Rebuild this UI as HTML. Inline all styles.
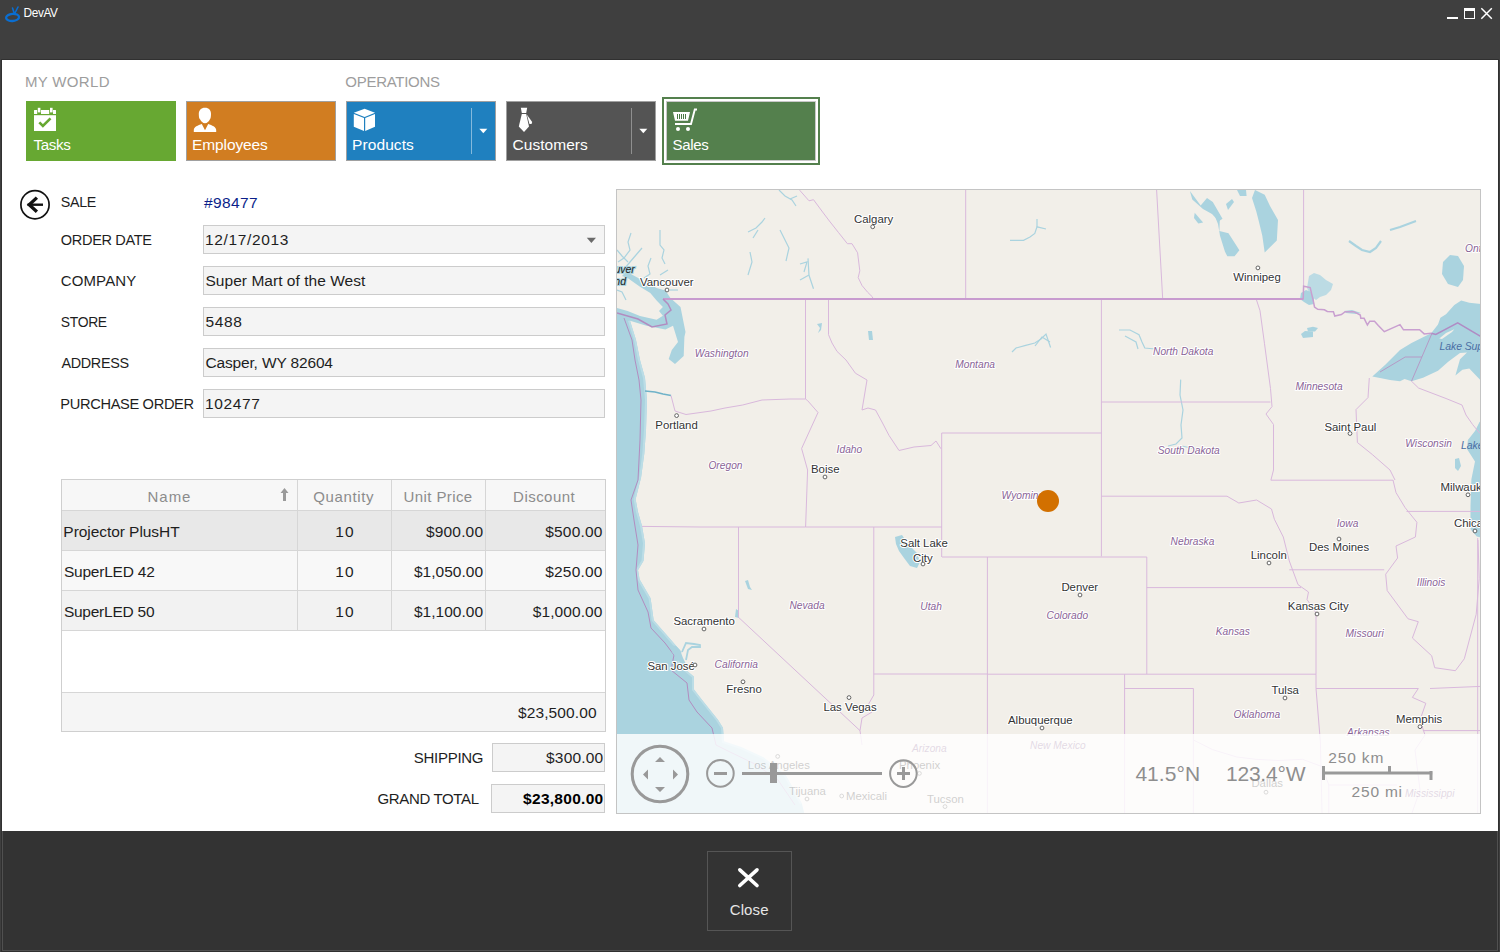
<!DOCTYPE html>
<html><head><meta charset="utf-8">
<style>
*{margin:0;padding:0;box-sizing:border-box}
html,body{width:1500px;height:952px;overflow:hidden;background:#3f3f3f;font-family:"Liberation Sans",sans-serif}
.abs{position:absolute}
.tile{top:101px;width:150px;height:60px}
.inp{left:203px;width:402px;height:29px;background:#f4f4f4;border:1px solid #cccccc}
.hl{left:62px;width:543px;height:1px;background:#d6d6d6}
.vl{top:480px;width:1px;height:150px;background:#d6d6d6}
.box{background:#f4f4f4;border:1px solid #cccccc}
.ct{font-family:"Liberation Sans",sans-serif;fill:#333;paint-order:stroke;stroke:#fff;stroke-width:2.2px;stroke-linejoin:round;letter-spacing:0px}
.stt{font-family:"Liberation Sans",sans-serif;font-style:italic;fill:#8a6496;paint-order:stroke;stroke:#fff;stroke-width:2px;stroke-linejoin:round;letter-spacing:0.03px}
.lk{font-family:"Liberation Sans",sans-serif;font-style:italic;fill:#4a6fa5;letter-spacing:-0.1px}
.isl{font-family:"Liberation Sans",sans-serif;font-style:italic;fill:#222;paint-order:stroke;stroke:#aad3df;stroke-width:2px}
.coord{color:#8c8c8c;font-size:21px;letter-spacing:-0.5px}
.sc{color:#8c8c8c;font-size:15.5px;letter-spacing:-0.3px}
</style></head>
<body>
<svg class="abs" style="left:3px;top:4px" width="20" height="20" viewBox="0 0 20 20">
  <ellipse cx="9.6" cy="13.4" rx="6.5" ry="3.6" fill="none" stroke="#0a6ed1" stroke-width="2.3" transform="rotate(-4 9.6 13.4)"/>
  <path d="M9.5 4 L11.5 10 M15 3 L11.5 10" stroke="#0a6ed1" stroke-width="1.6" stroke-linecap="round"/>
</svg>
<div class="abs" style="left:1447px;top:17px;width:11px;height:2px;background:#fff"></div>
<div class="abs" style="left:1464px;top:8px;width:11px;height:11px;border:1.5px solid #fff;border-top-width:3px"></div>
<svg class="abs" style="left:1480px;top:7px" width="14" height="14" viewBox="0 0 14 14"><path d="M1.3 1.3 L11.8 11.8 M11.8 1.3 L1.3 11.8" stroke="#fff" stroke-width="1.5"/></svg>

<div class="abs" style="left:1px;top:59px;width:1498px;height:893px;background:#303030"></div>
<div class="abs" style="left:2px;top:60px;width:1496px;height:771px;background:#fff"></div>
<div class="abs" style="left:2px;top:831px;width:1496px;height:120px;background:#333;border:1px solid #505050;border-top:none"></div>

<div class="abs tile" style="left:26px;background:#67a832"></div>
<div class="abs tile" style="left:186px;background:#d17d21;border:1px solid #a0a0a0"></div>
<div class="abs tile" style="left:346px;background:#1f80bf;border:1px solid #a0a0a0"></div>
<div class="abs tile" style="left:506px;background:#545454;border:1px solid #a0a0a0"></div>
<div class="abs" style="left:662px;top:97px;width:158px;height:68px;border:2px solid #54804d"></div>
<div class="abs tile" style="left:666px;background:#54804d;border:1px solid #c8c8c8"></div>

<div class="abs inp" style="top:225px"></div>
<div class="abs inp" style="top:266px"></div>
<div class="abs inp" style="top:307px"></div>
<div class="abs inp" style="top:348px"></div>
<div class="abs inp" style="top:389px"></div>

<div class="abs" style="left:61px;top:479px;width:545px;height:253px;border:1px solid #cfcfcf;background:#fff"></div>
<div class="abs" style="left:62px;top:480px;width:543px;height:30px;background:#f7f7f7"></div>
<div class="abs" style="left:62px;top:511px;width:543px;height:39px;background:#e8e8e8"></div>
<div class="abs" style="left:62px;top:551px;width:543px;height:39px;background:#f8f8f8"></div>
<div class="abs" style="left:62px;top:591px;width:543px;height:39px;background:#f2f2f2"></div>
<div class="abs" style="left:62px;top:693px;width:543px;height:38px;background:#f5f5f5"></div>
<div class="abs hl" style="top:510px"></div>
<div class="abs hl" style="top:550px"></div>
<div class="abs hl" style="top:590px"></div>
<div class="abs hl" style="top:630px"></div>
<div class="abs hl" style="top:692px"></div>
<div class="abs vl" style="left:297px"></div>
<div class="abs vl" style="left:391px"></div>
<div class="abs vl" style="left:485px"></div>
<svg class="abs" style="left:279px;top:487px" width="11" height="15" viewBox="0 0 11 15"><path d="M5.5 1 L9.5 6 H7 V14 H4 V6 H1.5 Z" fill="#9a9a9a"/></svg>
<div class="abs box" style="left:492px;top:743px;width:113px;height:29px"></div>
<div class="abs box" style="left:491px;top:784px;width:114px;height:29px"></div>

<svg class="abs" style="left:26px;top:101px" width="40" height="35" viewBox="26 101 40 35">
  <path d="M34 110.5 Q34 110 34.5 110 H37.2 V113.9 H34 Z M41 110 H49.2 V113.9 H41 Z M53 110 H55.5 Q56 110 56 110.5 V113.9 H53 Z" fill="#fff"/>
  <rect x="37.8" y="107.8" width="2.6" height="4.6" fill="#fff"/>
  <rect x="50" y="107.8" width="2.6" height="4.6" fill="#fff"/>
  <rect x="34" y="115.2" width="22" height="15.8" fill="#fff"/>
  <path d="M39.3 122.3 L42.9 125.9 L50.5 118.3" fill="none" stroke="#67a832" stroke-width="2.6"/>
</svg>
<svg class="abs" style="left:186px;top:101px" width="40" height="35" viewBox="186 101 40 35">
  <path d="M205 107.8 C209 107.8 211 110.5 211 114 C211 117 210.5 119 209.8 119.5 C208.8 121.5 207.3 123.2 205 123.2 C202.7 123.2 201.2 121.5 200.2 119.5 C199.2 119 198.8 117 198.8 114 C198.8 110.5 201 107.8 205 107.8 Z" fill="#fff"/>
  <path d="M201.8 124 L205 130.2 L208.2 124 C212 125.2 216.2 127 216.2 130 V132 H193.8 V130 C193.8 127 198 125.2 201.8 124 Z" fill="#fff"/>
</svg>
<svg class="abs" style="left:346px;top:101px" width="40" height="35" viewBox="346 101 40 35">
  <path d="M364.6 108.8 L375 112.8 L364.6 116.9 L353.8 112.8 Z" fill="#fff"/>
  <path d="M353.8 114 L364 117.9 V131 L353.8 126.8 Z" fill="#fff"/>
  <path d="M375 114 L365.2 117.9 V131 L375 126.8 Z" fill="#fff"/>
</svg>
<svg class="abs" style="left:506px;top:101px" width="40" height="35" viewBox="506 101 40 35">
  <path d="M520.8 107.8 H527.2 L526.2 113 H521.8 Z" fill="#fff"/>
  <path d="M521.8 114 H526.2 L529 126.6 L524 132 L518.8 126.6 Z" fill="#fff"/>
  <path d="M526.8 114.5 L532.2 122 L531.5 124 L529.5 124 Z" fill="#fff"/>
</svg>
<svg class="abs" style="left:666px;top:101px" width="40" height="35" viewBox="666 101 40 35">
  <path d="M673 112 H690 L688 120.8 H675 Z" fill="#fff"/>
  <rect x="677" y="114" width="1" height="5" fill="#4a7a45"/><rect x="679" y="114" width="1" height="5" fill="#4a7a45"/><rect x="681" y="114" width="1" height="5" fill="#4a7a45"/><rect x="683" y="114" width="1" height="5" fill="#4a7a45"/><rect x="685" y="114" width="1" height="5" fill="#4a7a45"/>
  <path d="M675 124 H691 L694.8 109.5 H697" fill="none" stroke="#fff" stroke-width="1.9"/>
  <circle cx="678" cy="129" r="2" fill="#fff"/>
  <circle cx="688" cy="129" r="2" fill="#fff"/>
</svg>
<div class="abs" style="left:471px;top:108px;width:1px;height:46px;background:rgba(255,255,255,0.45)"></div>
<svg class="abs" style="left:479px;top:128px" width="9" height="6" viewBox="0 0 9 6"><path d="M0.3 0.7 H8.3 L4.3 5.3 Z" fill="#fff"/></svg>
<div class="abs" style="left:631px;top:108px;width:1px;height:46px;background:rgba(255,255,255,0.35)"></div>
<svg class="abs" style="left:639px;top:128px" width="9" height="6" viewBox="0 0 9 6"><path d="M0.3 0.7 H8.3 L4.3 5.3 Z" fill="#fff"/></svg>
<svg class="abs" style="left:14px;top:185px" width="40" height="40" viewBox="14 185 40 40">
  <circle cx="35" cy="204.7" r="14.1" fill="none" stroke="#111" stroke-width="1.7"/>
  <path d="M27.5 204.7 H43" stroke="#111" stroke-width="2.4"/>
  <path d="M36.9 197.6 L29.2 204.7 L36.9 211.8" fill="none" stroke="#111" stroke-width="3.3" stroke-miterlimit="4"/>
</svg>
<svg class="abs" style="left:586px;top:237px" width="11" height="7" viewBox="0 0 11 7"><path d="M0.8 0.8 H10 L5.4 5.9 Z" fill="#6a6a6a"/></svg>
<div class="abs" style="left:707px;top:851px;width:85px;height:80px;border:1px solid #555"></div>
<svg class="abs" style="left:735px;top:865px" width="28" height="28" viewBox="0 0 28 28"><path d="M4.8 4.8 L22 20.5 M22 4.8 L4.8 20.5" stroke="#fff" stroke-width="3.6" stroke-linecap="round"/></svg>

<svg class="abs" style="left:616px;top:189px" width="866" height="626" viewBox="616 189 866 626">
<defs><clipPath id="mc"><rect x="617" y="190" width="864" height="624"/></clipPath></defs>
<g clip-path="url(#mc)">
<rect x="617" y="190" width="864" height="624" fill="#f2efe9"/>
<path d="M610,306 L627.6,311 L640,316 L656.6,319.7 L662.9,315.7 L659,311 L662.9,307 L656.6,300.6 L650.3,293 L640,286.7 L627.6,278 L622,276 L626.3,271.6 L640,279 L656.6,288 L665.4,290.5 L670.4,298 L680.5,307 L685.5,332 L684.4,337 L683.7,356 L675,364 L668.7,359 L671.8,350 L678,342 L673,325.8 L665.4,329.5 L646.5,325.8 L630,320.7 L636,340 L640,360 L645,378 L647,400 L646,430 L644.3,453.6 L641.1,477.3 L635.6,499.3 L638,512 L642,526 L645,543.4 L643.5,560.8 L638,570 L639.6,579.5 L650.6,598.4 L653.7,620.4 L670.3,639.3 L681.3,652 L679,664.5 L694,677 L694,689.7 L702,700 L718,720 L723,728 L724,742 L742,748 L764,758 L786,776 L802,804 L806,820 L610,820 Z" fill="#aad3df"/>
<path d="M630,320.7 L636,340 L640,360 L645,378 L647,400 L646,430 L644.3,453.6 L641.1,477.3 L635.6,499.3 L638,512 L642,526 L645,543.4 L643.5,560.8 L638,570 L639.6,579.5 L650.6,598.4 L653.7,620.4 L670.3,639.3 L681.3,652 L679,664.5 L694,677 L694,689.7 L702,700 L718,720 L723,728 L724,742 L742,748 L764,758 L786,776 L802,804" fill="none" stroke="#bcdde6" stroke-width="2" transform="translate(-1,0)"/>
<path d="M624,318 L632,340 L635,360 L639,380 L641,400 L640,440 L638,480 L631,500 L634,520 L638,545 L636,570 L638,590 L648,612 L651,628 L665,643 L674,655 L671,670 L687,683 L689,700 L697,712 L712,728 L716,745 L730,752 L755,764 L778,780 L795,805" fill="none" stroke="#b28cc0" stroke-width="1"/>
<path d="M670,645 L676,646 L680,650 L683,658 L688,668 L684,668 L678,660 L672,652 Z" fill="#aad3df"/>
<path d="M682,652 L686,643 L694,644 L700,645 L700,647 L692,647 L688,650 L686,660" fill="none" stroke="#aad3df" stroke-width="1.8"/>
<path d="M1372.3,376.4 L1385,365 L1400,350 L1411.5,343 L1423,337.3 L1431.2,333.3 L1438,324.6 L1440.4,317.7 L1446,314.2 L1454.3,305 L1461.2,300.4 L1469.3,302.7 L1490,305 L1490,386 L1480.3,380 L1469.3,368.5 L1462.4,369.7 L1455.4,375.4 L1460,359.3 L1467,352.4 L1460,353 L1448.5,361.6 L1438,370.8 L1423,377.8 L1411.5,381.2 L1404.6,379 L1400,381.2 L1390,380 L1380,378 Z" fill="#aad3df"/>
<path d="M1439.3,338.5 L1446,333 L1454.3,329.3 L1452,332 L1442,339 Z" fill="#f2efe9"/>
<path d="M1479.5,422 L1475,431 L1467.9,440 L1467,449 L1475,461.4 L1471.4,479.3 L1470.5,506 L1470.5,529.3 L1476.8,536.4 L1490,540 L1490,415 Z" fill="#aad3df"/>
<path d="M1309,276 L1314,273 L1320,275 L1326,280 L1333,284 L1331,290 L1326,295 L1320,297 L1316,300 L1311,296 L1307,288 Z" fill="#bcdbe4"/>
<path d="M1301,293 L1306,290 L1311,292 L1314,298 L1314,304 L1309,305 L1304,302 L1300,299 Z" fill="#aad3df"/>
<path d="M1344,311 L1352,310 L1361,313 L1356,314 L1346,313 Z" fill="#aad3df"/>
<path d="M1301,334 L1305,331 L1313,331.5 L1313,337 L1303,338 Z" fill="#aad3df"/>
<path d="M1307,328 L1313,326.8 L1318,328 L1315,331.6 L1308,331.5 Z" fill="#aad3df"/>
<path d="M1219.4,230.9 L1228.5,233.3 L1239.4,250.2 L1234.5,256.3 L1227.3,256.3 L1224.9,251.4 L1220,235.7 L1218,224 L1214,214 L1220,214 Z" fill="#aad3df"/>
<path d="M1255,190 L1264.7,194.7 L1270,206 L1278,220 L1276.8,240.6 L1264.7,252.6 L1262.3,235.7 L1259,222 L1256.3,211.6 L1252,198 Z" fill="#aad3df"/>
<path d="M1189.9,191 L1200.7,205.5 L1207,198 L1212.8,201.9 L1222.5,218.8 L1218.8,221.2 L1212,214 L1203,209 L1192.3,199.5 Z" fill="#aad3df"/>
<path d="M1194.7,212.8 L1203.1,222.4 L1198.3,223.6 L1194,218 Z" fill="#aad3df"/>
<path d="M1237,190 L1246,190 L1246.6,195.9 L1240,196 Z" fill="#aad3df"/>
<path d="M1226,204 L1232,199 L1234,202 L1228,210 Z" fill="#aad3df"/>
<path d="M1443,262 L1450,255 L1458,256 L1464,266 L1463,280 L1458,287 L1448,284 L1442,274 Z" fill="#aad3df"/>
<path d="M1349,241 L1356,246 L1362,250 L1370,252 L1376,248 L1381,241" fill="none" stroke="#aad3df" stroke-width="2.2"/>
<path d="M1390,230 L1400,227 L1408,224 L1416,221" fill="none" stroke="#aad3df" stroke-width="2"/>
<path d="M1455,459 L1459,458 L1461,466 L1458,471 L1455,468 Z" fill="#aad3df"/>
<path d="M895,537 L902,535 L906,541 L911,547 L917,553 L920,562 L917,568 L910,566 L904,558 L899,551 L896,544 Z" fill="#aad3df"/>
<path d="M736,609 L739,611 L739,618 L735,617 Z" fill="#aad3df"/>
<path d="M745,581 L748,580 L750,587 L752,590 L748,589 Z" fill="#aad3df"/>
<path d="M817,324 L822,323 L821,330 L818,333 L820,328 Z" fill="#aad3df"/>
<path d="M868,331 L872,331 L873,340 L869,340 Z" fill="#aad3df"/>
<path d="M1012,352 L1016,348 L1025.7,345.3 L1034.8,343 L1041,339 L1046,334 L1050.6,347.5" fill="none" stroke="#aad3df" stroke-width="1.2"/>
<path d="M1119,330 L1130,330 L1139,334.7 L1142,342 L1144.8,348 L1155,349 L1165.7,351" fill="none" stroke="#aad3df" stroke-width="1.2"/>
<path d="M1180.7,379.6 L1180,395 L1183,410 L1181,425 L1182,438 L1176,444 L1168,446" fill="none" stroke="#aad3df" stroke-width="1.2"/>
<path d="M660,230 L660,245 L664,250 L662,258 L665,264" fill="none" stroke="#aad3df" stroke-width="1.2"/>
<path d="M779,190 L785,196 L792,200 L796,206" fill="none" stroke="#aad3df" stroke-width="1.2"/>
<path d="M790,199 L797,196" fill="none" stroke="#aad3df" stroke-width="1.2"/>
<path d="M750,252 L752,262 L748,275" fill="none" stroke="#aad3df" stroke-width="1.2"/>
<path d="M780,230 L785,240 L789,248 L786,261" fill="none" stroke="#aad3df" stroke-width="1.2"/>
<path d="M748,232 L756,228 L762,222 L765,218" fill="none" stroke="#aad3df" stroke-width="1.2"/>
<path d="M753,238 L758,230" fill="none" stroke="#aad3df" stroke-width="1.2"/>
<path d="M800,264 L807,262 L804,272" fill="none" stroke="#aad3df" stroke-width="1.2"/>
<path d="M1050,342 L1042,337 L1035,346" fill="none" stroke="#aad3df" stroke-width="1.2"/>
<path d="M1125,336 L1136,342 L1138,349" fill="none" stroke="#aad3df" stroke-width="1.2"/>
<path d="M808,258.4 L809,275.3 L813.5,288.8" fill="none" stroke="#aad3df" stroke-width="1.2"/>
<path d="M800,280 L809,275" fill="none" stroke="#aad3df" stroke-width="1.2"/>
<path d="M1010,240.3 L1023.5,240.3 L1030,237 L1034.8,233.5 L1037,226.8 L1046,229" fill="none" stroke="#aad3df" stroke-width="1.2"/>
<path d="M1037,226.8 L1037,218.9" fill="none" stroke="#aad3df" stroke-width="1.2"/>
<path d="M1200,450 L1182,446" fill="none" stroke="#aad3df" stroke-width="1.2"/>
<path d="M631,233 L628,242 L630,250 L624,258 L618,262" fill="none" stroke="#aad3df" stroke-width="1.2"/>
<path d="M642,248 L636,255 L630,262 L625,268" fill="none" stroke="#aad3df" stroke-width="1.2"/>
<path d="M617,250 L622,256 L628,262" fill="none" stroke="#aad3df" stroke-width="1.2"/>
<path d="M651,258 L648,266 L650,274 L644,278" fill="none" stroke="#aad3df" stroke-width="1.2"/>
<path d="M660,275 L668,270" fill="none" stroke="#aad3df" stroke-width="1.2"/>
<path d="M617,290 L622,292 L626,300" fill="none" stroke="#aad3df" stroke-width="1.2"/>
<path d="M670,290 L678,290" fill="none" stroke="#aad3df" stroke-width="1.2"/>
<path d="M645,391 L655,392 L663,394 L671,395.5" fill="none" stroke="#6fb2c8" stroke-width="1.4"/>
<path d="M798,188 L800,190.6 L809,200.8 L813.5,199.7 L822.6,212 L829.4,221 L838.4,232.4 L847.4,243.7 L852,243.7 L857.6,252.8 L859.8,270.8 L858.2,277.6 L862,285.5 L867.7,292.3 L872.3,296.8 L873,299" fill="none" stroke="#d9b8dc" stroke-width="1"/>
<path d="M965.7,189 L965.7,299" fill="none" stroke="#d9b8dc" stroke-width="1"/>
<path d="M1156.6,189.8 L1162.7,299" fill="none" stroke="#d9b8dc" stroke-width="1"/>
<path d="M1303.6,189 L1303.6,286" fill="none" stroke="#d9b8dc" stroke-width="1"/>
<path d="M805.5,299 L805.5,399 L807.6,400.6 L818,412.5 L801.6,448.5 L807.6,470 L805.6,527" fill="none" stroke="#d9b8dc" stroke-width="1"/>
<path d="M828.5,299.3 L828.5,334.6 L832,343 L837,351.4 L846,360 L855.4,373.2 L867,380 L865,392 L862,410 L868,408 L875.5,410 L882,422 L889,435.4 L899,450.5 L914,447 L931,445.5 L936,441 L941,448.8" fill="none" stroke="#d9b8dc" stroke-width="1"/>
<path d="M941.7,433 L1101.4,433" fill="none" stroke="#d9b8dc" stroke-width="1"/>
<path d="M941.7,433 L941.7,557" fill="none" stroke="#d9b8dc" stroke-width="1"/>
<path d="M1101.4,299 L1101.4,556.4" fill="none" stroke="#d9b8dc" stroke-width="1"/>
<path d="M1101.4,402 L1270.5,402" fill="none" stroke="#d9b8dc" stroke-width="1"/>
<path d="M1256.2,299 L1260,310.7 L1264.5,343.7 L1270.5,388.6 L1272,406.6 L1266,414 L1273.5,424.5 L1273.5,470 L1270.9,480.2" fill="none" stroke="#d9b8dc" stroke-width="1"/>
<path d="M671,395.5 L675,411 L686,414.5 L711,411 L725,408 L742.7,405 L762,400 L790,399 L805.5,399" fill="none" stroke="#d9b8dc" stroke-width="1"/>
<path d="M642,526.4 L700,527 L805.6,527 L942,527" fill="none" stroke="#d9b8dc" stroke-width="1"/>
<path d="M738.5,527 L738.5,617.3 L860,730.6 L862,745" fill="none" stroke="#d9b8dc" stroke-width="1"/>
<path d="M873.8,527 L873.8,695 L868,705 L872,712 L862,718 L860,730.6" fill="none" stroke="#d9b8dc" stroke-width="1"/>
<path d="M942,557 L1146.8,557 L1146.8,674.2" fill="none" stroke="#d9b8dc" stroke-width="1"/>
<path d="M987.4,557 L987.4,813" fill="none" stroke="#d9b8dc" stroke-width="1"/>
<path d="M873.8,674 L987.4,674" fill="none" stroke="#d9b8dc" stroke-width="1"/>
<path d="M987.4,674.2 L1316,674.2" fill="none" stroke="#d9b8dc" stroke-width="1"/>
<path d="M1101.4,496.2 L1227,496.2 L1238.8,503 L1256.6,500 L1271.5,509 L1274.4,519.3 L1283.3,537 L1289.3,561 L1298,584.6 L1308.5,592 L1307,599.5 L1316,612.8 L1316,674.2 L1316,688.5 L1320.4,742 L1322,813" fill="none" stroke="#d9b8dc" stroke-width="1"/>
<path d="M1146.8,587.6 L1301,587.6" fill="none" stroke="#d9b8dc" stroke-width="1"/>
<path d="M1270.9,480.2 L1393,480.2" fill="none" stroke="#d9b8dc" stroke-width="1"/>
<path d="M1289.3,569.8 L1384.2,569.8" fill="none" stroke="#d9b8dc" stroke-width="1"/>
<path d="M1393,480 L1396,492.6 L1405,507.5 L1416.9,522.3 L1415.4,537 L1396,546 L1397.6,558 L1385.7,574.2 L1387.2,590.6 L1408,618.8 L1418.3,621.7 L1412.4,638 L1431.7,655.8 L1434.7,667.7 L1455.4,670.7 L1464.3,658.8 L1476.2,614.3 L1479.2,578.7 L1478,540" fill="none" stroke="#d9b8dc" stroke-width="1"/>
<path d="M1406.5,511.4 L1490,511.4" fill="none" stroke="#d9b8dc" stroke-width="1"/>
<path d="M1477.7,538 L1477.7,820" fill="none" stroke="#d9b8dc" stroke-width="1"/>
<path d="M1124.6,674.2 L1124.6,813" fill="none" stroke="#d9b8dc" stroke-width="1"/>
<path d="M1124.6,688.5 L1193.4,688.5 L1193.4,813" fill="none" stroke="#d9b8dc" stroke-width="1"/>
<path d="M1316,688.5 L1418.3,688.5 L1412.4,697.4 L1425.8,703.3 L1420,720 L1425,735 L1415,750 L1420,790 L1412,813" fill="none" stroke="#d9b8dc" stroke-width="1"/>
<path d="M1430,688.5 L1490,686" fill="none" stroke="#d9b8dc" stroke-width="1"/>
<path d="M1422.8,730.6 L1490,730.6" fill="none" stroke="#d9b8dc" stroke-width="1"/>
<path d="M1193.4,740 L1212.5,749.6 L1236.8,757 L1256,759.3 L1278,760.5 L1302.5,759.3 L1322,766.6 L1328.8,785 L1328.8,820" fill="none" stroke="#d9b8dc" stroke-width="1"/>
<path d="M1328.8,785 L1397,785" fill="none" stroke="#d9b8dc" stroke-width="1"/>
<path d="M1369.3,378 L1368,397.6 L1356,409.6 L1357.4,442.5 L1372.3,454.5 L1390,470 L1395,480" fill="none" stroke="#d9b8dc" stroke-width="1"/>
<path d="M1411.5,381.2 L1418.5,388 L1446,398.5 L1462,405 L1466,415 L1472.6,424.5 L1480,433.5" fill="none" stroke="#d9b8dc" stroke-width="1"/>
<path d="M1380,372 L1405.2,357 L1422,357" fill="none" stroke="#b59ac6" stroke-width="1"/>
<path d="M1431.7,334 L1411.5,381.2" fill="none" stroke="#b59ac6" stroke-width="1"/>
<path d="M1431.2,333.3 L1435.8,334.5 L1457.7,322.9 L1490,342" fill="none" stroke="#b08bc4" stroke-width="1.5"/>
<path d="M663,299 L1303.6,299" fill="none" stroke="#c89bcf" stroke-width="2"/>
<path d="M1303.2,299 L1303.6,286.2 L1310.2,287.6 L1313.6,302.3 L1314.5,307 L1317.8,309.3 L1324.4,309.8 L1327.3,311.5 L1333.4,311.7 L1334.8,316 L1341.4,314.5 L1345.2,311.7 L1353.7,311.7 L1360.3,315 L1360.8,318.3 L1364.1,318.3 L1367.4,325 L1369.8,321.2 L1374.5,321.2 L1378.3,325.4 L1384.3,331.7 L1400,324.6 L1403.5,329.8 L1419.6,329.8 L1424.2,333.9 L1431.2,333.3" fill="none" stroke="#c99fd0" stroke-width="1.5"/>
<path d="M663,299 L668,304 L671,310 L665,315 L667,324 L652,327 L638,319 L617,313" fill="none" stroke="#b28cc0" stroke-width="1.5"/>
<text x="854" y="223.4" class="ct" font-size="11.4">Calgary</text><circle cx="872.7" cy="226.8" r="1.9" fill="#fff" stroke="#555" stroke-width="0.9"/>
<text x="640" y="286" class="ct" font-size="11.4">Vancouver</text><circle cx="667" cy="290" r="1.9" fill="#fff" stroke="#555" stroke-width="0.9"/>
<text x="655.3" y="428.6" class="ct" font-size="11.4">Portland</text><circle cx="676.6" cy="415.6" r="1.9" fill="#fff" stroke="#555" stroke-width="0.9"/>
<text x="811" y="473.2" class="ct" font-size="11.4">Boise</text><circle cx="825" cy="477" r="1.9" fill="#fff" stroke="#555" stroke-width="0.9"/>
<text x="900.3" y="546.8" class="ct" font-size="11.4">Salt Lake</text>
<text x="913" y="561.5" class="ct" font-size="11.4">City</text><circle cx="923" cy="564" r="1.9" fill="#fff" stroke="#555" stroke-width="0.9"/>
<text x="673.4" y="624.8" class="ct" font-size="11.4">Sacramento</text><circle cx="704" cy="629" r="1.9" fill="#fff" stroke="#555" stroke-width="0.9"/>
<text x="647.4" y="670" class="ct" font-size="11.4">San José</text><circle cx="695" cy="665" r="1.9" fill="#fff" stroke="#555" stroke-width="0.9"/>
<text x="726.3" y="692.8" class="ct" font-size="11.4">Fresno</text><circle cx="743" cy="681.8" r="1.9" fill="#fff" stroke="#555" stroke-width="0.9"/>
<text x="823.4" y="711" class="ct" font-size="11.4">Las Vegas</text><circle cx="849" cy="697.6" r="1.9" fill="#fff" stroke="#555" stroke-width="0.9"/>
<text x="1233.3" y="281" class="ct" font-size="11.4">Winnipeg</text><circle cx="1257.9" cy="267.9" r="1.9" fill="#fff" stroke="#555" stroke-width="0.9"/>
<text x="1324.4" y="430.5" class="ct" font-size="11.4">Saint Paul</text><circle cx="1350" cy="433.5" r="1.9" fill="#fff" stroke="#555" stroke-width="0.9"/>
<text x="1061.4" y="590.6" class="ct" font-size="11.4">Denver</text><circle cx="1080" cy="595" r="1.9" fill="#fff" stroke="#555" stroke-width="0.9"/>
<text x="1250.7" y="559.4" class="ct" font-size="11.4">Lincoln</text><circle cx="1269" cy="563" r="1.9" fill="#fff" stroke="#555" stroke-width="0.9"/>
<text x="1309" y="551" class="ct" font-size="11.4">Des Moines</text><circle cx="1339" cy="539" r="1.9" fill="#fff" stroke="#555" stroke-width="0.9"/>
<text x="1287.8" y="609.8" class="ct" font-size="11.4">Kansas City</text><circle cx="1317" cy="614" r="1.9" fill="#fff" stroke="#555" stroke-width="0.9"/>
<text x="1271.5" y="694.4" class="ct" font-size="11.4">Tulsa</text><circle cx="1285" cy="698" r="1.9" fill="#fff" stroke="#555" stroke-width="0.9"/>
<text x="1396" y="722.6" class="ct" font-size="11.4">Memphis</text><circle cx="1420" cy="726.7" r="1.9" fill="#fff" stroke="#555" stroke-width="0.9"/>
<text x="1008" y="724" class="ct" font-size="11.4">Albuquerque</text><circle cx="1042" cy="728" r="1.9" fill="#fff" stroke="#555" stroke-width="0.9"/>
<text x="1440.6" y="491" class="ct" font-size="11.4">Milwaukee</text><circle cx="1468" cy="494.8" r="1.9" fill="#fff" stroke="#555" stroke-width="0.9"/>
<text x="1454" y="526.8" class="ct" font-size="11.4">Chicago</text><circle cx="1475" cy="531" r="1.9" fill="#fff" stroke="#555" stroke-width="0.9"/>
<text x="694.7" y="357" class="stt" font-size="10.2">Washington</text>
<text x="955.2" y="367.6" class="stt" font-size="10.2">Montana</text>
<text x="836.6" y="453" class="stt" font-size="10.2">Idaho</text>
<text x="708.4" y="469.4" class="stt" font-size="10.2">Oregon</text>
<text x="789.4" y="608.5" class="stt" font-size="10.2">Nevada</text>
<text x="920.3" y="610" class="stt" font-size="10.2">Utah</text>
<text x="714.6" y="668.4" class="stt" font-size="10.2">California</text>
<text x="1001.5" y="498.9" class="stt" font-size="10.2">Wyoming</text>
<text x="1153" y="354.8" class="stt" font-size="10.2">North Dakota</text>
<text x="1157.7" y="453.6" class="stt" font-size="10.2">South Dakota</text>
<text x="1295.4" y="390" class="stt" font-size="10.2">Minnesota</text>
<text x="1405.3" y="447" class="stt" font-size="10.2">Wisconsin</text>
<text x="1170.6" y="544.6" class="stt" font-size="10.2">Nebraska</text>
<text x="1336.7" y="526.8" class="stt" font-size="10.2">Iowa</text>
<text x="1416.8" y="585.5" class="stt" font-size="10.2">Illinois</text>
<text x="1046.5" y="619.3" class="stt" font-size="10.2">Colorado</text>
<text x="1215.7" y="634.5" class="stt" font-size="10.2">Kansas</text>
<text x="1345.6" y="637.4" class="stt" font-size="10.2">Missouri</text>
<text x="1233.5" y="717.6" class="stt" font-size="10.2">Oklahoma</text>
<text x="1347" y="736" class="stt" font-size="10.2">Arkansas</text>
<text x="1465" y="252.4" class="stt" font-size="10.2">Ontario</text>
<text x="1439.5" y="350" class="lk" font-size="10.5">Lake Superior</text>
<text x="1461" y="448.5" class="lk" font-size="10.5">Lake Michigan</text>
<text x="585" y="273.3" class="isl" font-size="10.5">Vancouver</text>
<text x="598" y="285.3" class="isl" font-size="10.5">Island</text>
<circle cx="1048" cy="501" r="11" fill="#d27000"/>
<rect x="617" y="734" width="864" height="80" fill="#fff" fill-opacity="0.82"/>
<g opacity="0.22"><text x="747.8" y="769" class="ct" font-size="11.4">Los Angeles</text><circle cx="777.7" cy="756.4" r="1.9" fill="#fff" stroke="#555" stroke-width="0.9"/><text x="789" y="794.8" class="ct" font-size="11.4">Tijuana</text><circle cx="807" cy="799" r="1.9" fill="#fff" stroke="#555" stroke-width="0.9"/><text x="846" y="799.8" class="ct" font-size="11.4">Mexicali</text><circle cx="841.7" cy="796" r="1.9" fill="#fff" stroke="#555" stroke-width="0.9"/><text x="899" y="769" class="ct" font-size="11.4">Phoenix</text><circle cx="919.4" cy="773.4" r="1.9" fill="#fff" stroke="#555" stroke-width="0.9"/><text x="927" y="803" class="ct" font-size="11.4">Tucson</text><circle cx="945" cy="806.6" r="1.9" fill="#fff" stroke="#555" stroke-width="0.9"/><text x="1251.4" y="787.3" class="ct" font-size="11.4">Dallas</text><circle cx="1266" cy="792.2" r="1.9" fill="#fff" stroke="#555" stroke-width="0.9"/><text x="912" y="752" class="stt" font-size="10.2">Arizona</text><text x="1030" y="749" class="stt" font-size="10.2">New Mexico</text><text x="1405" y="797" class="stt" font-size="10.2">Mississippi</text></g>
</g>
<rect x="616.5" y="189.5" width="864" height="624" fill="none" stroke="#c4c4c4" stroke-width="1"/>
<circle cx="660" cy="774" r="27.8" fill="none" stroke="#999" stroke-width="3"/>
<path d="M655 762 H665 L660 757 Z M655 787 H665 L660 792 Z M648 769.5 V779.5 L643 774.5 Z M673 769.5 V779.5 L678 774.5 Z" fill="#999"/>
<circle cx="720.4" cy="773.4" r="13.3" fill="none" stroke="#999" stroke-width="2"/>
<rect x="714" y="772" width="13" height="3" fill="#999"/>
<rect x="742" y="772" width="140" height="3" fill="#999"/>
<rect x="770" y="763" width="7" height="20" fill="#999"/>
<circle cx="903.4" cy="773.6" r="13.3" fill="none" stroke="#999" stroke-width="2"/>
<rect x="897" y="772" width="13" height="3" fill="#999"/><rect x="902" y="767" width="3" height="13" fill="#999"/>
</svg>
<svg class="abs" style="left:1320px;top:764px" width="116" height="18" viewBox="1320 764 116 18"><path d="M1323.5 766 V780 M1389.5 766 V772 M1431 771 V780 M1322 773 H1432.6" fill="none" stroke="#999" stroke-width="3"/></svg>

<svg class="abs" style="left:0;top:0" width="1500" height="952" viewBox="0 0 1500 952" font-family="Liberation Sans, sans-serif">
<text transform="translate(23.45,17.00) scale(0.9865,1)" x="0" y="0" font-size="12" fill="#fff" letter-spacing="-0.35">DevAV</text>
<text x="24.90" y="87.20" font-size="15" fill="#9d9d9d" letter-spacing="0.339">MY WORLD</text>
<text x="345.32" y="87.20" font-size="15" fill="#9d9d9d" letter-spacing="-0.283">OPERATIONS</text>
<text transform="translate(33.50,150.20) scale(0.9799,1)" x="0" y="0" font-size="15.5" fill="#fff" letter-spacing="-0.35">Tasks</text>
<text x="192.06" y="150.20" font-size="15.5" fill="#fff" letter-spacing="-0.121">Employees</text>
<text x="352.06" y="150.20" font-size="15.5" fill="#fff" letter-spacing="0.091">Products</text>
<text x="512.52" y="150.20" font-size="15.5" fill="#fff" letter-spacing="0.047">Customers</text>
<text transform="translate(672.62,150.20) scale(0.9693,1)" x="0" y="0" font-size="15.5" fill="#fff" letter-spacing="-0.35">Sales</text>
<text transform="translate(60.86,207.00) scale(0.9528,1)" x="0" y="0" font-size="15" fill="#1e1e1e" letter-spacing="-0.35">SALE</text>
<text x="204.12" y="207.90" font-size="15.5" fill="#0b1f8a" letter-spacing="0.352">#98477</text>
<text transform="translate(60.85,244.80) scale(0.9701,1)" x="0" y="0" font-size="15" fill="#1e1e1e" letter-spacing="-0.35">ORDER DATE</text>
<text x="205.04" y="244.80" font-size="15.5" fill="#1e1e1e" letter-spacing="0.645">12/17/2013</text>
<text x="60.75" y="285.80" font-size="15" fill="#1e1e1e" letter-spacing="0.125">COMPANY</text>
<text x="205.50" y="285.80" font-size="15.5" fill="#1e1e1e" letter-spacing="0.035">Super Mart of the West</text>
<text transform="translate(60.87,326.80) scale(0.9261,1)" x="0" y="0" font-size="15" fill="#1e1e1e" letter-spacing="-0.35">STORE</text>
<text x="205.58" y="326.80" font-size="15.5" fill="#1e1e1e" letter-spacing="0.584">5488</text>
<text transform="translate(61.50,367.80) scale(0.9606,1)" x="0" y="0" font-size="15" fill="#1e1e1e" letter-spacing="-0.35">ADDRESS</text>
<text x="205.42" y="367.80" font-size="15.5" fill="#1e1e1e" letter-spacing="-0.150">Casper, WY 82604</text>
<text transform="translate(60.33,408.80) scale(0.9760,1)" x="0" y="0" font-size="15" fill="#1e1e1e" letter-spacing="-0.35">PURCHASE ORDER</text>
<text x="205.04" y="408.80" font-size="15.5" fill="#1e1e1e" letter-spacing="0.629">102477</text>
<text x="147.60" y="501.70" font-size="15" fill="#8c8c8c" letter-spacing="0.942">Name</text>
<text x="313.32" y="501.70" font-size="15" fill="#8c8c8c" letter-spacing="0.614">Quantity</text>
<text x="403.57" y="501.70" font-size="15" fill="#8c8c8c" letter-spacing="0.400">Unit Price</text>
<text x="513.10" y="501.70" font-size="15" fill="#8c8c8c" letter-spacing="0.461">Discount</text>
<text x="63.36" y="537.00" font-size="15.5" fill="#1e1e1e" letter-spacing="-0.057">Projector PlusHT</text>
<text x="335.14" y="537.00" font-size="15.5" fill="#1e1e1e" letter-spacing="1.200">10</text>
<text x="425.95" y="537.00" font-size="15.5" fill="#1e1e1e" letter-spacing="0.177">$900.00</text>
<text x="545.25" y="537.00" font-size="15.5" fill="#1e1e1e" letter-spacing="0.177">$500.00</text>
<text x="63.90" y="576.80" font-size="15.5" fill="#1e1e1e" letter-spacing="-0.220">SuperLED 42</text>
<text x="335.14" y="576.80" font-size="15.5" fill="#1e1e1e" letter-spacing="1.200">10</text>
<text x="413.95" y="576.80" font-size="15.5" fill="#1e1e1e" letter-spacing="0.015">$1,050.00</text>
<text x="545.25" y="576.80" font-size="15.5" fill="#1e1e1e" letter-spacing="0.177">$250.00</text>
<text x="63.90" y="616.60" font-size="15.5" fill="#1e1e1e" letter-spacing="-0.244">SuperLED 50</text>
<text x="335.14" y="616.60" font-size="15.5" fill="#1e1e1e" letter-spacing="1.200">10</text>
<text x="413.95" y="616.60" font-size="15.5" fill="#1e1e1e" letter-spacing="0.015">$1,100.00</text>
<text x="532.85" y="616.60" font-size="15.5" fill="#1e1e1e" letter-spacing="0.065">$1,000.00</text>
<text x="518.05" y="718.00" font-size="15.5" fill="#1e1e1e" letter-spacing="0.102">$23,500.00</text>
<text x="413.72" y="763.30" font-size="15" fill="#1e1e1e" letter-spacing="-0.271">SHIPPING</text>
<text x="377.55" y="804.00" font-size="15" fill="#1e1e1e" letter-spacing="-0.350">GRAND TOTAL</text>
<text x="546.05" y="763.30" font-size="15.5" fill="#1e1e1e" letter-spacing="0.177">$300.00</text>
<text x="523.07" y="804.00" font-size="15.5" fill="#000" letter-spacing="0.286" font-weight="bold">$23,800.00</text>
<text x="729.65" y="915.00" font-size="15" fill="#e6e6e6" letter-spacing="0.156">Close</text>
<text x="1135.38" y="781.20" font-size="21" fill="#8e8e8e" letter-spacing="0.047">41.5°N</text>
<text x="1225.92" y="781.20" font-size="21" fill="#8e8e8e" letter-spacing="-0.194">123.4°W</text>
<text x="1328.22" y="762.50" font-size="15.5" fill="#8e8e8e" letter-spacing="0.848">250 km</text>
<text x="1351.62" y="796.60" font-size="15.5" fill="#8e8e8e" letter-spacing="0.777">250 mi</text>
</svg>
</body></html>
